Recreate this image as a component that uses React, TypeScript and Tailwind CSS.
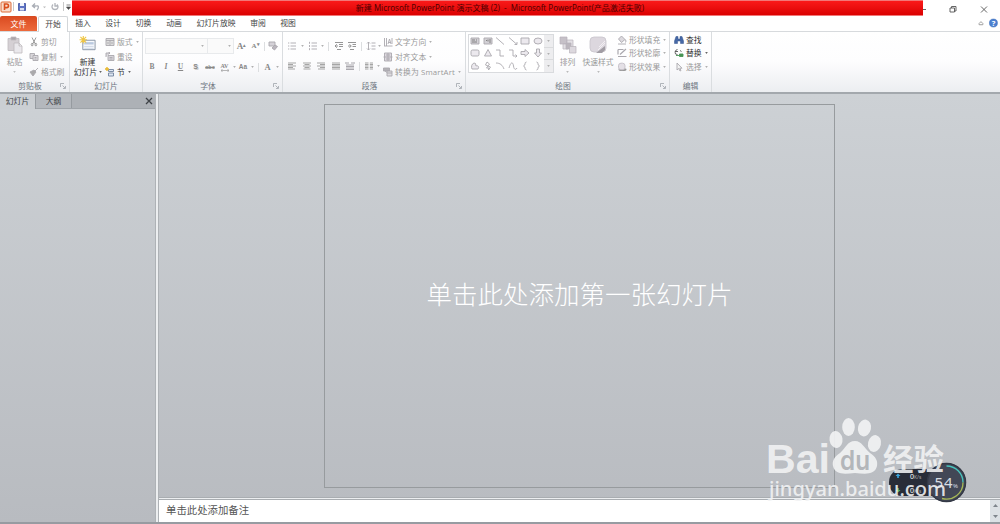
import type { ReactNode } from 'react';

const shapeCells = [
    'text', 'vtext', 'line', 'arrow', 'rect', 'oval',
    'round', 'triangle', 'elbow', 'elbowArrow', 'right', 'down',
    'pie', 'bolt', 'arc', 'curve', 'lbrace', 'rbrace',
];

function Caret({ className = '' }: { className?: string }) {
    return (
        <svg viewBox="0 0 4 3" className={`w-[3px] h-[2px] shrink-0 ${className || 'fill-[#b0b0b0]'}`}>
            <path d="M0 0h4L2 3z" />
        </svg>
    );
}

function Slot({ w, children }: { w: string; children?: ReactNode }) {
    return <div className={`flex shrink-0 items-center justify-center ${w}`}>{children}</div>;
}

function Sep({ w }: { w: string }) {
    return (
        <Slot w={w}>
            <div className="h-[9px] w-px bg-[#dcdee0]" />
        </Slot>
    );
}

function Glyph({ name }: { name: string }) {
    return (
        <svg viewBox="0 0 10 10" className="block size-[10px] shrink-0" fill="none" stroke="#aaa8ae" strokeWidth="0.9">
            {name === 'cut' && <path d="M3 .5 6 6.5M7 .5 4 6.5M4 6.5a1.200 1.200 0 1 0-.2 2.200zM6 6.5a1.200 1.200 0 1 1 .2 2.200z" stroke="#929292" />}
            {name === 'copy' && (
                <>
                    <path d="M1 1.500h4.500v5H1z" fill="#d9d7db" />
                    <path d="M4 3.500h5v5H4zM5.500 5.500h2M5.500 7h2" fill="#dfdde1" />
                </>
            )}
            {name === 'brush' && <path d="m9 1-4 4M1 5l4-2 2 2-3 4zM3 5l2 2" fill="#aaa" />}
            {name === 'layout' && <path d="M1 1.500h8v7H1zM1 3.500h8M5 3.500v5M2 6h2M6 6h2" fill="#ddd" />}
            {name === 'reset' && <path d="M3 3.500h6v5H3zM4.500 5.500h3M4.500 7h3M1 5V1h4M3.500 0 5 1 3.500 2.500" fill="#d8d5db" />}
            {name === 'section' && (
                <>
                    <path d="M3.500 2.500h5v2h-5zM3.500 6h5v3h-5z" fill="#dfe7f3" stroke="#71829d" />
                    <path d="M2 0v4M0 2h4" stroke="#e8b72b" strokeWidth="1.400" />
                </>
            )}
            {name === 'erase' && (
                <>
                    <path d="M1 1h6v4H1z" fill="#d5d2d8" />
                    <path d="m4 7 3-3 2.500 1.500L6.500 9z" fill="#bbb6be" />
                </>
            )}
            {name === 'bullets' && <path d="M1 2h1.300M1 5h1.300M1 8h1.300M3.500 2H9M3.500 5H9M3.500 8H9" />}
            {name === 'numbers' && <path d="M1.500 .8v2M1.500 4v2M1.500 7.200v2M3.500 2H9M3.500 5H9M3.500 8H9" />}
            {name === 'outdent' && <path d="M1 1.500h8M5 3.500h4M5 5.500h4M3 8.500h4M4 5H1m1.800-1.800L1 5l1.800 1.800" stroke="#8b8b8b" />}
            {name === 'indent' && <path d="M1 1.500h8M5.500 3.500H9M5.500 5.500H9M3 8.500h4M1 5h3M2.500 3.200 4.300 5 2.500 6.800" stroke="#8b8b8b" />}
            {name === 'spacing' && <path d="M2.500 1v8M1 2.500 2.500 1 4 2.500M1 7.500 2.500 9 4 7.500M5.500 2H9.500M5.500 5H9.500M5.500 8H9.500" />}
            {name === 'left' && <path d="M1 2h8M1 3.500h5M1 5h8M1 6.500h5M1 8h7" stroke="#a5a5a5" strokeWidth="1.200" />}
            {name === 'center' && <path d="M1 2h8M2.500 3.500h5M1 5h8M2.500 6.500h5M1.500 8h7" stroke="#a5a5a5" strokeWidth="1.200" />}
            {name === 'alignRight' && <path d="M1 2h8M4 3.500h5M1 5h8M4 6.500h5M2 8h7" stroke="#a5a5a5" strokeWidth="1.200" />}
            {name === 'justify' && <path d="M1 2h8M1 3.500h8M1 5h8M1 6.500h8M1 8h8" stroke="#a5a5a5" strokeWidth="1.200" />}
            {name === 'spread' && <path d="M1 1v2M9 1v2M2 2h2M6 2h2M1 4h8M1 5.500h8M1 7h8M1 8.500h8" strokeWidth="1.100" />}
            {name === 'columns' && <path d="M1 2h3.500M1 3.500h3.500M1 5h3.500M1 6.500h3.500M1 8h3.500M5.800 2H9M5.800 3.500H9M5.800 5H9M5.800 6.500H9M5.800 8H9" stroke="#a5a5a5" strokeWidth="1.200" />}
            {name === 'direction' && <path d="M1.500 1v8M3.500 1v8M5 7l1.500-5L8 7M5.500 5.500h2M1 9h8.500M9 1v6" />}
            {name === 'alignText' && <path d="M1.500 1h7v8h-7zM5 1v8M.5 5h9M3 3h4M3 7h4" fill="#ddd8df" />}
            {name === 'smart' && (
                <>
                    <path d="M.5 1h6v3h-6zM2 4l2 1.500" fill="#b4b2b7" />
                    <path d="M4 4h5v5H4zM4 6h5" fill="#dedce0" />
                </>
            )}
            {name === 'fill' && <path d="m4.500 1 3.500 3.500-3.500 3L1.500 4zM8 4.500c1.500 1 1 2 .5 3M1 9h8" fill="#dcd9de" />}
            {name === 'outline' && <path d="M1 1.500h5.500M1 1.500v5M3 6.500l6-5.500M1 8.500h8.500" strokeWidth="1.200" />}
            {name === 'effect' && (
                <>
                    <ellipse cx="5.500" cy="7.500" rx="4" ry="1.500" fill="#999" stroke="none" />
                    <rect x="1.500" y="1.200" width="6.500" height="6.500" rx="2.500" fill="#e4e0e6" stroke="#c4c0c7" />
                </>
            )}
            {name === 'find' && (
                <path d="M2 1.500h2V4h2V1.500h2L9.500 6v2.500h-3V6h-3v2.500h-3V6z" fill="#4668a6" stroke="#34558f" strokeWidth="0.5" />
            )}
            {name === 'replace' && (
                <>
                    <path d="M3.500 1.500C1 2 .8 4 1.500 6l2 .5M1 3.500h3M6 2.500l1.500 1" stroke="#555" />
                    <path d="M5.500 6h3.500v2.500H5.500zM2 7.500h3" fill="#489455" stroke="#489455" />
                </>
            )}
            {name === 'select' && <path d="M3 1v7l1.700-1.500L6 9l1-.5-1.200-2.300H8z" fill="#f5f5f5" />}

            {(name === 'text' || name === 'vtext') && (
                <>
                    <path d="M1 2h8v6H1z" fill="#d3d1d6" />
                    <path d={name === 'text' ? 'M2 4h3M2 6h5M6 4h1' : 'M7 3v4M5 3.500v2M3 4.500h1'} stroke="#777" />
                </>
            )}
            {name === 'line' && <path d="m1 1.500 8 7" />}
            {name === 'arrow' && <path d="m1 1.500 8 7M9 6v2.500H6.500" />}
            {name === 'rect' && <path d="M1 2h8v6H1z" fill="#ece9ee" />}
            {name === 'oval' && <ellipse cx="5" cy="5" rx="4" ry="3" fill="#ece9ee" />}
            {name === 'round' && <rect x="1" y="2" width="8" height="6" rx="1.500" fill="#ece9ee" />}
            {name === 'triangle' && <path d="m5 1.500 3.500 6.500h-7z" fill="#ece9ee" />}
            {name === 'elbow' && <path d="M1 2h4v6h4" />}
            {name === 'elbowArrow' && <path d="M1 2h4v6h4M7.500 6.500 9 8 7.500 9.500" />}
            {name === 'right' && <path d="M1 3.500h4v-2L9 5 5 8.500v-2H1z" fill="#ece9ee" />}
            {name === 'down' && <path d="M3.500 1v4h-2L5 9l3.500-4h-2V1z" fill="#ece9ee" />}
            {name === 'pie' && <path d="M4 2C1.500 3 1 6 2 8h6c1.500-2 0-4-2-3L5.500 2.500z" fill="#ece9ee" />}
            {name === 'bolt' && <path d="m4 1-1.500 3L5 5 3.500 7H6l-.5 2 2-3L5 5l1.500-2z" />}
            {name === 'arc' && <path d="M1 2c4 0 6.500 2 8 6" />}
            {name === 'curve' && <path d="M1 7C3 0 5 1 5.500 5S8 9 9 7" />}
            {name === 'lbrace' && <path d="M6.500 1C4 1 6 4.500 3.500 5 6 5.500 4 9 6.500 9" />}
            {name === 'rbrace' && <path d="M3.500 1C6 1 4 4.500 6.500 5 4 5.500 6 9 3.500 9" />}
        </svg>
    );
}

function Command({ icon, text, caret, dark, size = 'h-[15px]' }: { icon: string; text: string; caret?: boolean; dark?: boolean; size?: string }) {
    return (
        <div className={`flex items-center gap-[2px] whitespace-nowrap ${size} ${dark ? 'text-[#333]' : 'text-[#999]'}`}>
            <Glyph name={icon} />
            <span>{text}</span>
            {caret && <Caret className={dark ? 'ml-px fill-[#666]' : 'ml-px fill-[#b0b0b0]'} />}
        </div>
    );
}

function Group({ title, w, launcher, children }: { title: string; w: string; launcher?: boolean; children: ReactNode }) {
    return (
        <section className={`flex shrink-0 flex-col border-r border-[#dadde0] ${w}`}>
            <div className="flex h-[48px]">{children}</div>
            <div className="flex h-[12px] items-center text-[#6d7580]">
                <span className="flex-1 text-center">{title}</span>
                {launcher && (
                    <span className="w-[9px]">
                        <svg viewBox="0 0 6 6" className="size-[6px]" fill="none" stroke="#a0a5ab" strokeWidth="0.8">
                            <path d="M.5 4V.5H4M2.500 2.500 5 5M5.500 3v2.500H3" />
                        </svg>
                    </span>
                )}
            </div>
        </section>
    );
}

function TitleBar() {
    return (
        <header className="flex h-[16px] items-center bg-white">
            <div className="flex h-full w-[72px] shrink-0 items-center">
                <svg viewBox="0 0 72 16" className="h-[16px] w-[72px]" fill="none">
                    <rect x="1" y="2" width="10" height="10" rx="1" fill="#f8dccb" stroke="#dd6b37" />
                    <path d="M4.500 10V4h2.200a1.800 1.800 0 0 1 0 3.600H4.500" stroke="#d94f1c" strokeWidth="1.600" />
                    <path d="M13.500 2v9M63.500 2v9" stroke="#c9c9c9" />
                    <path d="M18.500 3.500h7v7h-7z" fill="#5e73c3" stroke="#5265ae" />
                    <path d="M20 3h4v3h-4z" fill="#f2f5fc" />
                    <path d="M20 8h4v2.500h-4z" fill="#d9dff2" />
                    <path d="M33 6h3c3-1 3 2 1 4M35 3.500 32.500 6 35 8" stroke="#a9adb5" strokeWidth="1.300" />
                    <path d="M43 6.500h3l-1.500 1.700z" fill="#bbb" />
                    <path d="M53 4.500c-2 2-1 5 2 5s4-3 2-5M55 3v3h3" stroke="#b1b4ba" strokeWidth="1.300" />
                    <path d="M66.500 5h4M66.500 7h4l-2 2.500z" fill="#444" stroke="#555" strokeWidth="0.7" />
                </svg>
            </div>
            <div className="flex h-full w-[851px] shrink-0 items-center justify-center border-y border-[#f27777] bg-linear-to-b from-[#fa1919] to-[#db0000] pl-[5px] text-[8.030px] whitespace-pre text-[#4b0000]">
                新建 Microsoft PowerPoint 演示文稿 (2)  -  Microsoft PowerPoint(产品激活失败)
            </div>
            <svg viewBox="0 0 77 16" className="h-[16px] w-[77px]" fill="none" stroke="#555" strokeWidth="0.900">
                <path d="M0 9.500h3M27 8h4.500v4H27zM28.500 8V6.500H33V11h-1.500M58 6.500l6 6M64 6.500l-6 6" />
            </svg>
        </header>
    );
}

function RibbonTabs() {
    return (
        <nav className="flex h-[16px] items-stretch border-b border-[#d7dadd] bg-white text-[7.800px] text-[#444]">
            <div className="flex w-[37px] items-center justify-center rounded-t-[2px] bg-linear-to-b from-[#d9491f] to-[#ed6a3c] text-[8px] text-white">文件</div>
            <div className="-mb-px ml-px flex w-[30px] items-center justify-center rounded-t-[2px] border border-b-0 border-[#d3d6d9] bg-white">开始</div>
            <Slot w="w-[30px]">插入</Slot>
            <Slot w="w-[30px]">设计</Slot>
            <Slot w="w-[31px]">切换</Slot>
            <Slot w="w-[30px]">动画</Slot>
            <Slot w="w-[54px]">幻灯片放映</Slot>
            <Slot w="w-[30px]">审阅</Slot>
            <Slot w="w-[30px]">视图</Slot>
            <svg viewBox="0 0 24 16" className="ml-auto h-[15px] w-[24px]">
                <path d="M2.500 8 4.500 6l2 2v1.300H2.500z" fill="none" stroke="#999" />
                <circle cx="17.800" cy="7.500" r="4.300" fill="#4a7fd0" stroke="#3264b1" strokeWidth="0.500" />
                <text x="17.800" y="10.300" textAnchor="middle" fontSize="8" fontWeight="700" fill="#fff">?</text>
            </svg>
        </nav>
    );
}

function Ribbon() {
    return (
        <div className="flex h-[62px] border-b-2 border-[#a3a8ad] bg-linear-to-b from-white via-[#fdfdfe] to-[#eceef1] text-[7.800px] leading-[10px]">
            <Group title="剪贴板" w="w-[70px]" launcher>
                <div className="flex w-[29px] flex-col items-center pt-[4px] text-[#999]">
                    <svg viewBox="0 0 16 18" className="h-[18px] w-[16px]" fill="#d5d0d4" stroke="#bfbabe" strokeWidth="0.800">
                        <path d="M1 2.500h11v12H1z" />
                        <path d="M4 1h5v3H4z" fill="#aaa6ab" />
                        <path d="M7 7h5l3 3v7H7zM12 7v3h3" fill="#eae8ec" />
                    </svg>
                    <span className="mt-[3px]">粘贴</span>
                    <Caret className="mt-[4px] fill-[#c4c4c4]" />
                </div>
                <div className="flex flex-col pt-[2px]">
                    <Command icon="cut" text="剪切" />
                    <Command icon="copy" text="复制" caret />
                    <Command icon="brush" text="格式刷" />
                </div>
            </Group>
            <Group title="幻灯片" w="w-[73px]">
                <div className="flex w-[35px] flex-col items-center pt-[4px] whitespace-nowrap text-[#333]">
                    <svg viewBox="0 0 18 18" className="h-[17px] w-[18px]">
                        <path d="M3.500 4.500h13v10h-13z" fill="#f8fafd" stroke="#8693a4" />
                        <path d="M5 6.500h10v2.500H5z" fill="#bac9df" />
                        <path d="M5 11h10M5 13h10" stroke="#cdd7e5" />
                        <path d="M4 0v8M0 4h8M1 1l6 6M7 1 1 7" stroke="#efc645" strokeWidth="1.200" />
                    </svg>
                    <span className="mt-[4px]">新建</span>
                    <span className="flex items-center gap-[2px] pl-[1px]">幻灯片<Caret className="fill-[#666]" /></span>
                </div>
                <div className="flex flex-col pt-[2px]">
                    <Command icon="layout" text="版式" caret />
                    <Command icon="reset" text="重设" />
                    <Command icon="section" text="节" caret dark />
                </div>
            </Group>
            <Group title="字体" w="w-[140px]" launcher>
                <div className="flex flex-col pt-[6px] pl-[2px] font-['Liberation_Serif',serif] text-[#888]">
                    <div className="flex h-[16px] items-center">
                        <div className="flex h-[16px] w-[63px] items-center justify-end border border-[#e8eaec] bg-[#fafafa] pr-[3px]"><Caret /></div>
                        <div className="flex h-[16px] w-[26px] items-center justify-end border border-l-0 border-[#e8eaec] bg-[#fafafa] pr-[2px]"><Caret /></div>
                        <Slot w="w-[15px]"><span className="text-[9px] font-bold">A<sup className="text-[5px]">▴</sup></span></Slot>
                        <Slot w="w-[13px]"><span className="text-[7px] font-bold">A<sup className="text-[5px]">▾</sup></span></Slot>
                        <Sep w="w-[5px]" />
                        <Slot w="w-[11px]"><Glyph name="erase" /></Slot>
                    </div>
                    <div className="mt-[6px] flex h-[14px] items-center text-[7.500px] font-bold">
                        <Slot w="w-[14px]">B</Slot>
                        <Slot w="w-[14px]"><i>I</i></Slot>
                        <Slot w="w-[15px]"><u>U</u></Slot>
                        <Slot w="w-[15px]"><span className="font-['Liberation_Sans',sans-serif] text-[7px] [text-shadow:1px_1px_#ccc]">S</span></Slot>
                        <Slot w="w-[14px]"><s className="font-['Liberation_Sans',sans-serif] text-[5.500px]">abc</s></Slot>
                        <Slot w="w-[15px]">
                            <span className="flex flex-col items-center text-[6px] leading-[6px]">
                                AV
                                <svg viewBox="0 0 8 3" className="h-[3px] w-[8px]" fill="none" stroke="#999" strokeWidth="0.700"><path d="M0 1.500h8M1.500 0 0 1.500 1.500 3M6.500 0 8 1.500 6.500 3" /></svg>
                            </span>
                        </Slot>
                        <Slot w="w-[4px]"><Caret /></Slot>
                        <Slot w="w-[14px]"><span className="font-['Liberation_Sans',sans-serif] text-[6.500px]">Aa</span></Slot>
                        <Slot w="w-[4px]"><Caret /></Slot>
                        <Sep w="w-[8px]" />
                        <Slot w="w-[11px]"><span className="text-[8.500px]">A</span></Slot>
                        <Slot w="w-[8px]"><Caret /></Slot>
                    </div>
                </div>
            </Group>
            <Group title="段落" w="w-[183px]" launcher>
                <div className="flex w-[99px] shrink-0 flex-col pt-[8px] pl-[2px]">
                    <div className="flex h-[12px] items-center">
                        <Slot w="w-[14px]"><Glyph name="bullets" /></Slot>
                        <Slot w="w-[6px]"><Caret /></Slot>
                        <Slot w="w-[15px]"><Glyph name="numbers" /></Slot>
                        <Slot w="w-[5px]"><Caret /></Slot>
                        <Sep w="w-[7px]" />
                        <Slot w="w-[13px]"><Glyph name="outdent" /></Slot>
                        <Slot w="w-[13px]"><Glyph name="indent" /></Slot>
                        <Sep w="w-[6px]" />
                        <Slot w="w-[13px]"><Glyph name="spacing" /></Slot>
                        <Slot w="w-[4px]"><Caret /></Slot>
                    </div>
                    <div className="mt-[8px] flex h-[12px] items-center">
                        <Slot w="w-[14px]"><Glyph name="left" /></Slot>
                        <Slot w="w-[15px]"><Glyph name="center" /></Slot>
                        <Slot w="w-[14px]"><Glyph name="alignRight" /></Slot>
                        <Slot w="w-[15px]"><Glyph name="justify" /></Slot>
                        <Slot w="w-[13px]"><Glyph name="spread" /></Slot>
                        <Sep w="w-[6px]" />
                        <Slot w="w-[14px]"><Glyph name="columns" /></Slot>
                        <Slot w="w-[4px]"><Caret /></Slot>
                    </div>
                </div>
                <div className="flex flex-col pt-[2px] pl-[1px]">
                    <Command icon="direction" text="文字方向" caret />
                    <Command icon="alignText" text="对齐文本" caret />
                    <div className="tracking-[0.15px]">
                        <Command icon="smart" text="转换为 SmartArt" caret />
                    </div>
                </div>
            </Group>
            <Group title="绘图" w="w-[204px]" launcher>
                <div className="mt-[2px] ml-[2px] flex h-[39px] w-[86px] shrink-0 border border-[#d9dbde] bg-white">
                    <div className="grid w-[75px] grid-cols-6 grid-rows-3 place-items-center">
                        {shapeCells.map((name) => <Glyph key={name} name={name} />)}
                    </div>
                    <div className="flex flex-1 flex-col divide-y divide-[#dadbdd] bg-[#ededef]">
                        {[0, 1, 2].map((i) => <div key={i} className="flex flex-1 items-center justify-center"><Caret /></div>)}
                    </div>
                </div>
                <div className="flex w-[27px] shrink-0 flex-col items-center pt-[4px] text-[#999]">
                    <svg viewBox="0 0 18 18" className="h-[18px] w-[18px]" stroke="#b8b3ba" strokeWidth="0.700">
                        <path d="M1 1h7v7H1z" fill="#c6c1c8" />
                        <path d="M8 4h6v7H8zM4 8h5v5H4z" fill="#e2dfe4" />
                        <path d="M7 7h5v6H7z" fill="#bbb6bd" />
                        <path d="M10.500 10.500h6.500V17h-6.500z" fill="#dcd8de" />
                    </svg>
                    <span className="mt-[3px]">排列</span>
                    <Caret className="mt-[4px] fill-[#bbb]" />
                </div>
                <div className="flex w-[34px] shrink-0 flex-col items-center pt-[4px] whitespace-nowrap text-[#999]">
                    <svg viewBox="0 0 18 18" className="h-[18px] w-[18px]">
                        <rect x="1" y="1" width="16" height="15" rx="4" fill="#dcd7de" stroke="#c8c4cb" strokeWidth="0.800" />
                        <path d="m7 17 9-7v4l-3 3z" fill="#a19da4" />
                        <path d="m10 11 6-6M9 14l7-7" stroke="#f2eff3" />
                    </svg>
                    <span className="mt-[3px]">快速样式</span>
                    <Caret className="mt-[4px] fill-[#bbb]" />
                </div>
                <div className="flex flex-col pt-[1px] pl-[2px]">
                    <Command icon="fill" text="形状填充" caret size="h-[13.500px]" />
                    <Command icon="outline" text="形状轮廓" caret size="h-[13.500px]" />
                    <Command icon="effect" text="形状效果" caret size="h-[13.500px]" />
                </div>
            </Group>
            <Group title="编辑" w="w-[42px]">
                <div className="flex flex-col pt-[1px] pl-[4px]">
                    <Command icon="find" text="查找" dark size="h-[13.500px]" />
                    <Command icon="replace" text="替换" caret dark size="h-[13.500px]" />
                    <Command icon="select" text="选择" caret size="h-[13.500px]" />
                </div>
            </Group>
        </div>
    );
}

function SlidePane() {
    return (
        <aside className="w-[156px] shrink-0 border-r border-[#aeb2b6]">
            <div className="flex h-[15px] items-stretch border-b border-[#9fa4a9] bg-[#adb1b6] text-[7.800px] text-[#3e4246]">
                <div className="-mb-px flex w-[36px] items-center justify-center border-r border-[#969ba0] bg-[#cbcfd3]">幻灯片</div>
                <div className="flex w-[36px] items-center justify-center border-r border-[#969ba0] bg-[#b4b8bd] pt-px">大纲</div>
                <svg viewBox="0 0 8 8" className="mt-[3px] mr-[2px] ml-auto size-[8px]" stroke="#3f4347" strokeWidth="1.300">
                    <path d="m1 1 6 6M7 1 1 7" />
                </svg>
            </div>
        </aside>
    );
}

function SpeedMeter() {
    return (
        <svg viewBox="0 0 84 44" className="absolute top-[461px] left-[886px] h-[44px] w-[84px] font-['Noto_Sans',sans-serif]">
            <rect x="3" y="8" width="65" height="27" rx="13" fill="#292d38" />
            <circle cx="60.500" cy="21.500" r="19.500" fill="#424756" />
            <circle cx="60.500" cy="21.500" r="19" fill="none" stroke="#343946" strokeWidth="1.500" />
            <path d="M60.500 5a16.500 16.500 0 0 1 16.500 16.500" fill="none" stroke="#48c4bd" strokeWidth="1.300" />
            <path d="M77 21.500A16.500 16.500 0 0 1 56 37.500" fill="none" stroke="#a7b957" strokeWidth="1.300" />
            <path d="M12 12.500 9.500 15h1.700v2h1.600v-2h1.700z" fill="#39a6df" />
            <path d="M12 31.500 9.500 29h1.700v-2h1.600v2h1.700z" fill="#4caf62" />
            <text x="24" y="18" fontSize="7" fill="#fff">0<tspan fontSize="5" fill="#aaa">K/s</tspan></text>
            <text x="24" y="32" fontSize="7" fill="#fff">0<tspan fontSize="5" fill="#aaa">K/s</tspan></text>
            <text x="48.500" y="26.500" fontSize="15" fill="#d7dce2" textLength="18">54</text>
            <text x="67" y="27" fontSize="6" fill="#d7dce2">%</text>
        </svg>
    );
}

function Watermark() {
    return (
        <svg viewBox="0 0 184 90" className="absolute top-[415px] left-[766px] h-[90px] w-[184px]" fill="#f2f3f4" fillOpacity="0.900">
            <text x="0" y="58" fontSize="40.500" fontWeight="700" textLength="64" lengthAdjust="spacingAndGlyphs" className="font-['Liberation_Sans',sans-serif]">Bai</text>
            <ellipse cx="70" cy="24.500" rx="6.500" ry="8.500" transform="rotate(-8 70 24.500)" />
            <ellipse cx="82.500" cy="12" rx="6.300" ry="9" />
            <ellipse cx="98.500" cy="13" rx="6.500" ry="8.500" transform="rotate(12 98.500 13)" />
            <ellipse cx="108.500" cy="28.500" rx="6.500" ry="8.500" transform="rotate(12 108.500 28.500)" />
            <path d="M89 26c-8 0-9 7-15 12-6 4-8 8-7 13 2 9 11 8 22 7 11 1 20 2 22-7 1-5-1-9-7-13-6-5-8-12-15-12z" />
            <text x="74" y="54.500" fontSize="27" fontWeight="600" fill="#b3b6ba" fillOpacity="1" textLength="30" lengthAdjust="spacingAndGlyphs" className="font-['Inter',sans-serif]">du</text>
            <text x="117" y="55" fontSize="30" fontWeight="700" textLength="61" lengthAdjust="spacingAndGlyphs" className="font-['Noto_Sans_CJK_SC',sans-serif]">经验</text>
            <text x="3" y="81" fontSize="20.500" fontWeight="500" textLength="177" lengthAdjust="spacingAndGlyphs" className="font-['Noto_Sans',sans-serif]">jingyan.baidu.com</text>
        </svg>
    );
}

export default function App() {
    return (
        <div className="relative flex h-[524px] w-[1000px] flex-col overflow-hidden bg-white font-['Open_Sans','Noto_Sans_CJK_SC',sans-serif]">
            <TitleBar />
            <RibbonTabs />
            <Ribbon />
            <div className="flex flex-1 border-b-2 border-[#979ba1] bg-linear-to-b from-[#cdd1d5] to-[#b8bbc0]">
                <SlidePane />
                <div className="w-[2px] shrink-0 bg-[#eceef0]" />
                <main className="flex flex-1 flex-col border-l border-[#aeb2b6]">
                    <div className="h-[403px] shrink-0 pt-[10px] pl-[165px]">
                        <div className="flex h-[384px] w-[511px] items-center justify-center border border-[#979b9e] pb-[5px] font-['Noto_Sans_CJK_SC',sans-serif] text-[25.500px] font-light text-white">
                            单击此处添加第一张幻灯片
                        </div>
                    </div>
                    <div className="h-[3px] shrink-0 border-y border-[#a9adb1] bg-[#eceef0]" />
                    <div className="flex flex-1 bg-white">
                        <div className="flex flex-1 items-center pl-[7px] text-[10.400px] text-[#555]">单击此处添加备注</div>
                        <div className="flex w-[10px] flex-col items-center justify-around bg-[#dce1e5]">
                            <svg viewBox="0 0 5 3" className="h-[3px] w-[5px] fill-[#7e858c]"><path d="M0 3h5L2.500 0z" /></svg>
                            <svg viewBox="0 0 5 3" className="h-[3px] w-[5px] fill-[#7e858c]"><path d="M0 0h5L2.500 3z" /></svg>
                        </div>
                    </div>
                </main>
            </div>
            <SpeedMeter />
            <Watermark />
        </div>
    );
}
